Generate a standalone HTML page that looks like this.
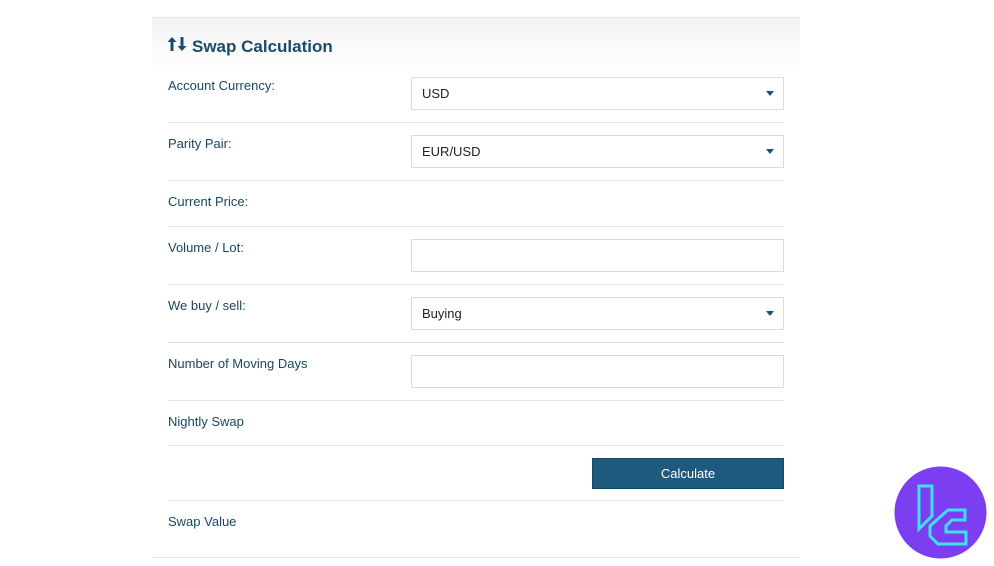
<!DOCTYPE html>
<html><head><style>
body{margin:0;width:994px;height:566px;background:#fff;position:relative;overflow:hidden;font-family:"Liberation Sans",sans-serif;}
.a{position:absolute}
.lbl{position:absolute;left:168px;font-size:13px;color:#1a4560}
.inp{position:absolute;left:411px;width:371px;height:31px;border:1px solid #dcdcdc;background:#fff;box-sizing:content-box}
.inp span{position:absolute;left:10px;top:8px;font-size:13px;color:#222}
.car{position:absolute;right:9px;top:13px;width:0;height:0;border-left:4px solid transparent;border-right:4px solid transparent;border-top:5px solid #1f4f73}
.sep{position:absolute;left:168px;width:616px;height:1px;background:#e3e3e3}
</style></head><body>
<div class="a" style="left:152px;top:17px;width:648px;height:1px;background:#e6e6e6"></div>
<div class="a" style="left:152px;top:18px;width:648px;height:52px;background:linear-gradient(#f3f3f3,#fff)"></div>
<svg class="a" style="left:167px;top:36px" width="22" height="16" viewBox="0 0 22 16"><path d="M5 1L0.5 6h3v9h3V6h3z M15 15l4.5-5h-3V1h-3v9h-3z" fill="#1b4a6b"/></svg>
<div class="a" style="left:192px;top:37px;font-size:17px;font-weight:bold;color:#1b4a6b">Swap Calculation</div>
<div class="lbl" style="top:78px">Account Currency:</div>
<div class="inp" style="top:77px"><span>USD</span><div class="car"></div></div>
<div class="sep" style="top:122px"></div>
<div class="lbl" style="top:136px">Parity Pair:</div>
<div class="inp" style="top:135px"><span>EUR/USD</span><div class="car"></div></div>
<div class="sep" style="top:180px"></div>
<div class="lbl" style="top:194px">Current Price:</div>
<div class="sep" style="top:226px"></div>
<div class="lbl" style="top:240px">Volume / Lot:</div>
<div class="inp" style="top:239px"></div>
<div class="sep" style="top:284px"></div>
<div class="lbl" style="top:298px">We buy / sell:</div>
<div class="inp" style="top:297px"><span>Buying</span><div class="car"></div></div>
<div class="sep" style="top:342px"></div>
<div class="lbl" style="top:356px">Number of Moving Days</div>
<div class="inp" style="top:355px"></div>
<div class="sep" style="top:400px"></div>
<div class="lbl" style="top:414px">Nightly Swap</div>
<div class="sep" style="top:445px"></div>
<div class="a" style="left:592px;top:458px;width:190px;height:29px;background:#1d5a7e;border:1px solid #174a68;color:#fff;font-size:13px;text-align:center;line-height:29px">Calculate</div>
<div class="sep" style="top:500px"></div>
<div class="lbl" style="top:514px">Swap Value</div>
<div class="a" style="left:152px;top:557px;width:648px;height:1px;background:#e3e3e3"></div>
<svg class="a" style="left:894px;top:466px" width="93" height="93" viewBox="0 0 93 93">
<circle cx="46.5" cy="46.5" r="46" fill="#7b3ef0"/>
<path d="M25 20h13v30l-13 13z" fill="none" stroke="#3de0f0" stroke-width="3"/>
<path d="M36 60l18-16h17v10H58l-6 6v6h20v12H44l-8-8z" fill="none" stroke="#3de0f0" stroke-width="3"/>
</svg>
</body></html>
